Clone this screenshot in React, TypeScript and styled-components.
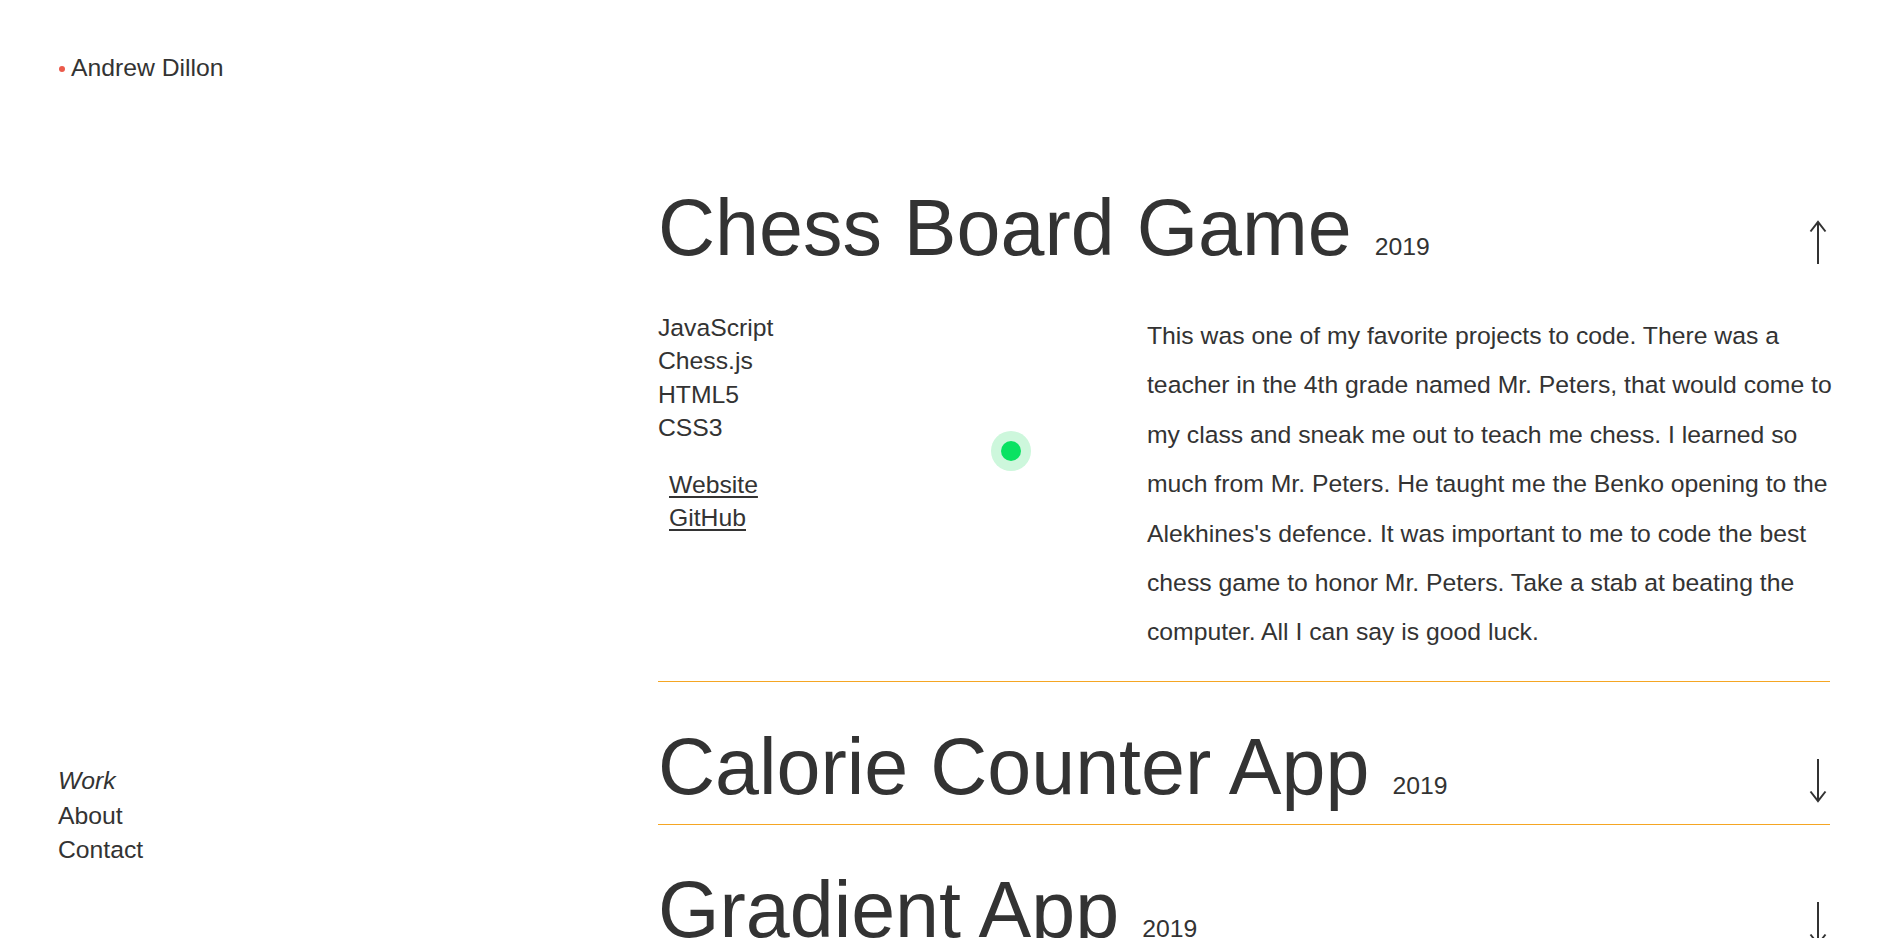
import React from "react";
import styled, { createGlobalStyle } from "styled-components";

const GlobalStyle = createGlobalStyle`
  html, body {
    margin: 0;
    padding: 0;
    overflow: hidden;
    background: #ffffff;
  }
  body {
    font-family: "Liberation Sans", Arial, Helvetica, sans-serif;
    color: #333333;
  }
  * { box-sizing: border-box; }
`;

const Page = styled.div`
  display: grid;
  grid-template-columns: 658px 1fr;
  padding-right: 73px;
  min-height: 100vh;
`;

const Sidebar = styled.aside`
  position: sticky;
  top: 0;
  height: 100vh;
  display: flex;
  flex-direction: column;
  justify-content: space-between;
  padding: 51px 0 70px 58px;
`;

const Brand = styled.a`
  display: inline-flex;
  align-items: center;
  gap: 6px;
  font-size: 24.74px;
  line-height: 34px;
  color: #333333;
  text-decoration: none;
  &::before {
    content: "";
    width: 6px;
    height: 6px;
    margin-left: 1px;
    margin-top: 1px;
    border-radius: 50%;
    background: #eb5a4b;
  }
`;

const Nav = styled.nav`
  display: flex;
  flex-direction: column;
`;

const NavLink = styled.a<{ $active?: boolean }>`
  font-size: 24.74px;
  line-height: 34.6px;
  color: #333333;
  text-decoration: none;
  font-style: ${(p) => (p.$active ? "italic" : "normal")};
`;

const Main = styled.main`
  padding-top: 143px;
`;

const Item = styled.section`
  padding: 45px 0 18px;
  border-bottom: 1px solid #f5a623;
  &:first-child {
    padding-top: 45px;
    padding-bottom: 17px;
  }
`;

const Header = styled.header`
  display: flex;
  align-items: baseline;
`;

const Title = styled.h2`
  margin: 0;
  font-size: 79px;
  font-weight: 400;
  line-height: 1;
  color: #333333;
  letter-spacing: 0;
`;

const Year = styled.span`
  margin-left: 23px;
  font-size: 24.74px;
  line-height: 1;
`;

const Toggle = styled.button`
  margin-left: auto;
  margin-right: 3px;
  margin-bottom: 3px;
  align-self: flex-end;
  padding: 0;
  border: 0;
  background: none;
  color: #333333;
  display: flex;
  cursor: pointer;
`;

const Body = styled.div`
  display: grid;
  grid-template-columns: 489px 1fr;
  margin-top: 43px;
  padding-bottom: 7px;
`;

const Meta = styled.div`
  display: flex;
  flex-direction: column;
  gap: 23px;
  padding-top: 1px;
`;

const List = styled.ul`
  list-style: none;
  margin: 0;
  padding: 0;
  font-size: 24.74px;
  line-height: 33.4px;
`;

const LinkList = styled(List)`
  padding-left: 11px;
`;

const ExtLink = styled.a`
  color: #333333;
  text-decoration: underline;
  text-decoration-thickness: 2px;
  text-underline-offset: 3px;
`;

const Description = styled.p`
  margin: 0 -8px 0 0;
  padding-top: 1px;
  font-size: 24.74px;
  line-height: 49.4px;
`;

const Cursor = styled.div`
  position: fixed;
  left: 991px;
  top: 431px;
  width: 40px;
  height: 40px;
  border-radius: 50%;
  background: #cdf7dc;
  display: flex;
  align-items: center;
  justify-content: center;
  pointer-events: none;
  &::after {
    content: "";
    width: 20px;
    height: 20px;
    border-radius: 50%;
    background: #0ae262;
  }
`;

const Arrow = ({ up }: { up?: boolean }) => (
  <svg
    width="18"
    height="44"
    viewBox="0 0 18 44"
    fill="none"
    stroke="currentColor"
    strokeWidth="2"
    style={up ? undefined : { transform: "rotate(180deg)" }}
  >
    <path d="M9 2 L9 44" />
    <path d="M1.5 11.5 L9 1.8 L16.5 11.5" strokeLinejoin="miter" />
  </svg>
);

type Project = {
  title: string;
  year: string;
  open?: boolean;
};

const projects: Project[] = [
  { title: "Chess Board Game", year: "2019", open: true },
  { title: "Calorie Counter App", year: "2019" },
  { title: "Gradient App", year: "2019" },
  { title: "Weather App", year: "2018" },
];

export default function App() {
  return (
    <>
      <GlobalStyle />
      <Page>
        <Sidebar>
          <div>
            <Brand href="#">Andrew Dillon</Brand>
          </div>
          <Nav>
            <NavLink href="#" $active>
              Work
            </NavLink>
            <NavLink href="#">About</NavLink>
            <NavLink href="#">Contact</NavLink>
          </Nav>
        </Sidebar>
        <Main>
          {projects.map((p) => (
            <Item key={p.title}>
              <Header>
                <Title>{p.title}</Title>
                <Year>{p.year}</Year>
                <Toggle aria-label={p.open ? "Collapse" : "Expand"}>
                  <Arrow up={p.open} />
                </Toggle>
              </Header>
              {p.open && (
                <Body>
                  <Meta>
                    <List>
                      <li>JavaScript</li>
                      <li>Chess.js</li>
                      <li>HTML5</li>
                      <li>CSS3</li>
                    </List>
                    <LinkList>
                      <li>
                        <ExtLink href="#">Website</ExtLink>
                      </li>
                      <li>
                        <ExtLink href="#">GitHub</ExtLink>
                      </li>
                    </LinkList>
                  </Meta>
                  <Description>
                    This was one of my favorite projects to code. There was a
                    teacher in the 4th grade named Mr. Peters, that would come
                    to my class and sneak me out to teach me chess. I learned so
                    much from Mr. Peters. He taught me the Benko opening to the
                    Alekhines's defence. It was important to me to code the best
                    chess game to honor Mr. Peters. Take a stab at beating the
                    computer. All I can say is good luck.
                  </Description>
                </Body>
              )}
            </Item>
          ))}
        </Main>
      </Page>
      <Cursor />
    </>
  );
}
